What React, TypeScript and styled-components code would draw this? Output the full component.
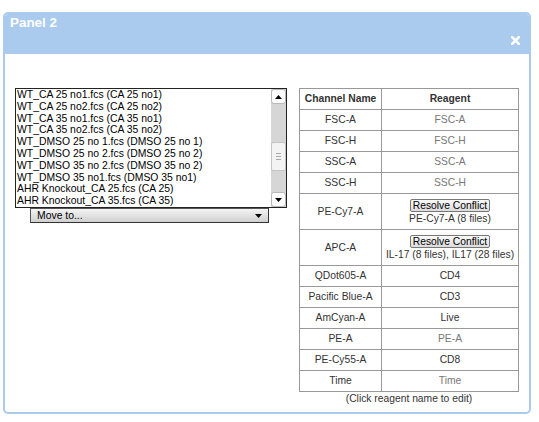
import React from 'react';
import styled, { createGlobalStyle } from 'styled-components';

const Global = createGlobalStyle`
  html, body { margin: 0; padding: 0; background: #fff; }
  body { font-family: "Liberation Sans", Arial, sans-serif; }
`;

const Panel = styled.div`
  margin: 12px 0 0 3px;
  width: 528px;
  height: 402px;
  box-sizing: border-box;
  border: 2px solid #aacbee;
  border-radius: 5px;
  display: flex;
  flex-direction: column;
  overflow: hidden;
  background: #fff;
`;

const Header = styled.div`
  height: 40px;
  flex: none;
  background: #aacbee;
  display: flex;
  justify-content: space-between;
  align-items: flex-start;
  padding: 1px 9px 0 5px;
  box-sizing: border-box;
`;

const Title = styled.div`
  color: #fff;
  font-weight: bold;
  font-size: 13.4px;
`;

const Close = styled.svg`
  align-self: flex-end;
  margin-bottom: 9px;
`;

const Body = styled.div`
  flex: 1;
  display: flex;
  justify-content: space-between;
  align-items: flex-start;
  padding: 34px 10px 0 10px;
`;

const LeftCol = styled.div`
  display: flex;
  flex-direction: column;
  width: 272px;
`;

const ListBox = styled.div`
  width: 272px;
  height: 120px;
  box-sizing: border-box;
  border: 1px solid #222;
  display: flex;
`;

const Items = styled.div`
  flex: 1;
  overflow: hidden;
  padding-left: 1px;
`;

const Item = styled.div`
  font-size: 10.4px;
  line-height: 11.8px;
  color: #000;
  white-space: nowrap;
`;

const ScrollBar = styled.div`
  width: 15px;
  display: flex;
  flex-direction: column;
  background: #d6d6d6;
`;

const ScrollBtn = styled.div`
  height: 15px;
  flex: none;
  background: #fdfdfd;
  border: 1px solid #b8b8b8;
  border-radius: 3px;
  box-sizing: border-box;
  display: flex;
  align-items: center;
  justify-content: center;
`;

const Track = styled.div`
  flex: 1;
  display: flex;
  flex-direction: column;
  padding-top: 38px;
`;

const Thumb = styled.div`
  height: 29px;
  background: #f3f3f3;
  border: 1px solid #c4c4c4;
  border-radius: 2px;
  box-sizing: border-box;
  display: flex;
  flex-direction: column;
  align-items: center;
  justify-content: center;
  gap: 2px;
`;

const Grip = styled.div`
  width: 5px;
  height: 1px;
  background: #a8a8a8;
`;

const MoveSelect = styled.div`
  margin-left: 15px;
  width: 239px;
  height: 15px;
  box-sizing: border-box;
  border: 1px solid #555;
  border-right-color: #333;
  border-bottom-color: #333;
  background: linear-gradient(#f4f4f4, #d0d0d0);
  display: flex;
  align-items: center;
  justify-content: space-between;
  padding: 0 6px 0 6px;
  font-size: 10.4px;
  color: #000;
`;

const RightCol = styled.div`
  display: flex;
  flex-direction: column;
  align-items: center;
  width: 220px;
`;

const Table = styled.table`
  width: 220px;
  border-collapse: collapse;
  border: 1px solid #999;
  font-size: 10.3px;
  line-height: 12px;
`;

const Th = styled.th`
  border: 1px solid #999;
  padding: 4px 2px;
  color: #333;
  font-weight: bold;
  text-align: center;
`;

const Td = styled.td<{ $muted?: boolean }>`
  border: 1px solid #999;
  padding: 4px 2px;
  text-align: center;
  color: ${(p) => (p.$muted ? '#777' : '#333')};
  white-space: nowrap;
`;

const ResolveBtn = styled.button`
  font-family: "Liberation Sans", Arial, sans-serif;
  font-size: 10.3px;
  line-height: 11px;
  height: 13px;
  margin: 1px 0 1px;
  padding: 0 2px;
  border: 1px solid #777;
  border-radius: 2px;
  background: linear-gradient(#fafafa, #dcdcdc);
  color: #000;
  display: block;
  margin-left: auto;
  margin-right: auto;
`;

const Note = styled.div`
  font-size: 10.3px;
  line-height: 12px;
  color: #333;
  margin-top: 1px;
`;

const files = [
  'WT_CA 25 no1.fcs (CA 25 no1)',
  'WT_CA 25 no2.fcs (CA 25 no2)',
  'WT_CA 35 no1.fcs (CA 35 no1)',
  'WT_CA 35 no2.fcs (CA 35 no2)',
  'WT_DMSO 25 no 1.fcs (DMSO 25 no 1)',
  'WT_DMSO 25 no 2.fcs (DMSO 25 no 2)',
  'WT_DMSO 35 no 2.fcs (DMSO 35 no 2)',
  'WT_DMSO 35 no1.fcs (DMSO 35 no1)',
  'AHR Knockout_CA 25.fcs (CA 25)',
  'AHR Knockout_CA 35.fcs (CA 35)',
];

type Row = { ch: string; reagent?: string; muted?: boolean; conflict?: string };

const rows: Row[] = [
  { ch: 'FSC-A', reagent: 'FSC-A', muted: true },
  { ch: 'FSC-H', reagent: 'FSC-H', muted: true },
  { ch: 'SSC-A', reagent: 'SSC-A', muted: true },
  { ch: 'SSC-H', reagent: 'SSC-H', muted: true },
  { ch: 'PE-Cy7-A', conflict: 'PE-Cy7-A (8 files)' },
  { ch: 'APC-A', conflict: 'IL-17 (8 files), IL17 (28 files)' },
  { ch: 'QDot605-A', reagent: 'CD4' },
  { ch: 'Pacific Blue-A', reagent: 'CD3' },
  { ch: 'AmCyan-A', reagent: 'Live' },
  { ch: 'PE-A', reagent: 'PE-A', muted: true },
  { ch: 'PE-Cy55-A', reagent: 'CD8' },
  { ch: 'Time', reagent: 'Time', muted: true },
];

const Tri = ({ down }: { down?: boolean }) => (
  <svg width="7" height="4" viewBox="0 0 7 4">
    <polygon points={down ? '0,0 7,0 3.5,4' : '0,4 7,4 3.5,0'} fill="#000" />
  </svg>
);

export default function App() {
  return (
    <>
      <Global />
      <Panel>
        <Header>
          <Title>Panel 2</Title>
          <Close width="9" height="9" viewBox="0 0 9 9">
            <path d="M1.2 1.2 L7.8 7.8 M7.8 1.2 L1.2 7.8" stroke="#fff" strokeWidth="2.6" strokeLinecap="square" />
          </Close>
        </Header>
        <Body>
          <LeftCol>
            <ListBox>
              <Items>
                {files.map((f) => (
                  <Item key={f}>{f}</Item>
                ))}
              </Items>
              <ScrollBar>
                <ScrollBtn>
                  <Tri />
                </ScrollBtn>
                <Track>
                  <Thumb>
                    <Grip />
                    <Grip />
                    <Grip />
                  </Thumb>
                </Track>
                <ScrollBtn>
                  <Tri down />
                </ScrollBtn>
              </ScrollBar>
            </ListBox>
            <MoveSelect>
              <span>Move to...</span>
              <Tri down />
            </MoveSelect>
          </LeftCol>
          <RightCol>
            <Table>
              <colgroup>
                <col style={{ width: 82 }} />
                <col />
              </colgroup>
              <thead>
                <tr>
                  <Th>Channel Name</Th>
                  <Th>Reagent</Th>
                </tr>
              </thead>
              <tbody>
                {rows.map((r) => (
                  <tr key={r.ch}>
                    <Td>{r.ch}</Td>
                    {r.conflict ? (
                      <Td>
                        <ResolveBtn>Resolve Conflict</ResolveBtn>
                        {r.conflict}
                      </Td>
                    ) : (
                      <Td $muted={r.muted}>{r.reagent}</Td>
                    )}
                  </tr>
                ))}
              </tbody>
            </Table>
            <Note>(Click reagent name to edit)</Note>
          </RightCol>
        </Body>
      </Panel>
    </>
  );
}
